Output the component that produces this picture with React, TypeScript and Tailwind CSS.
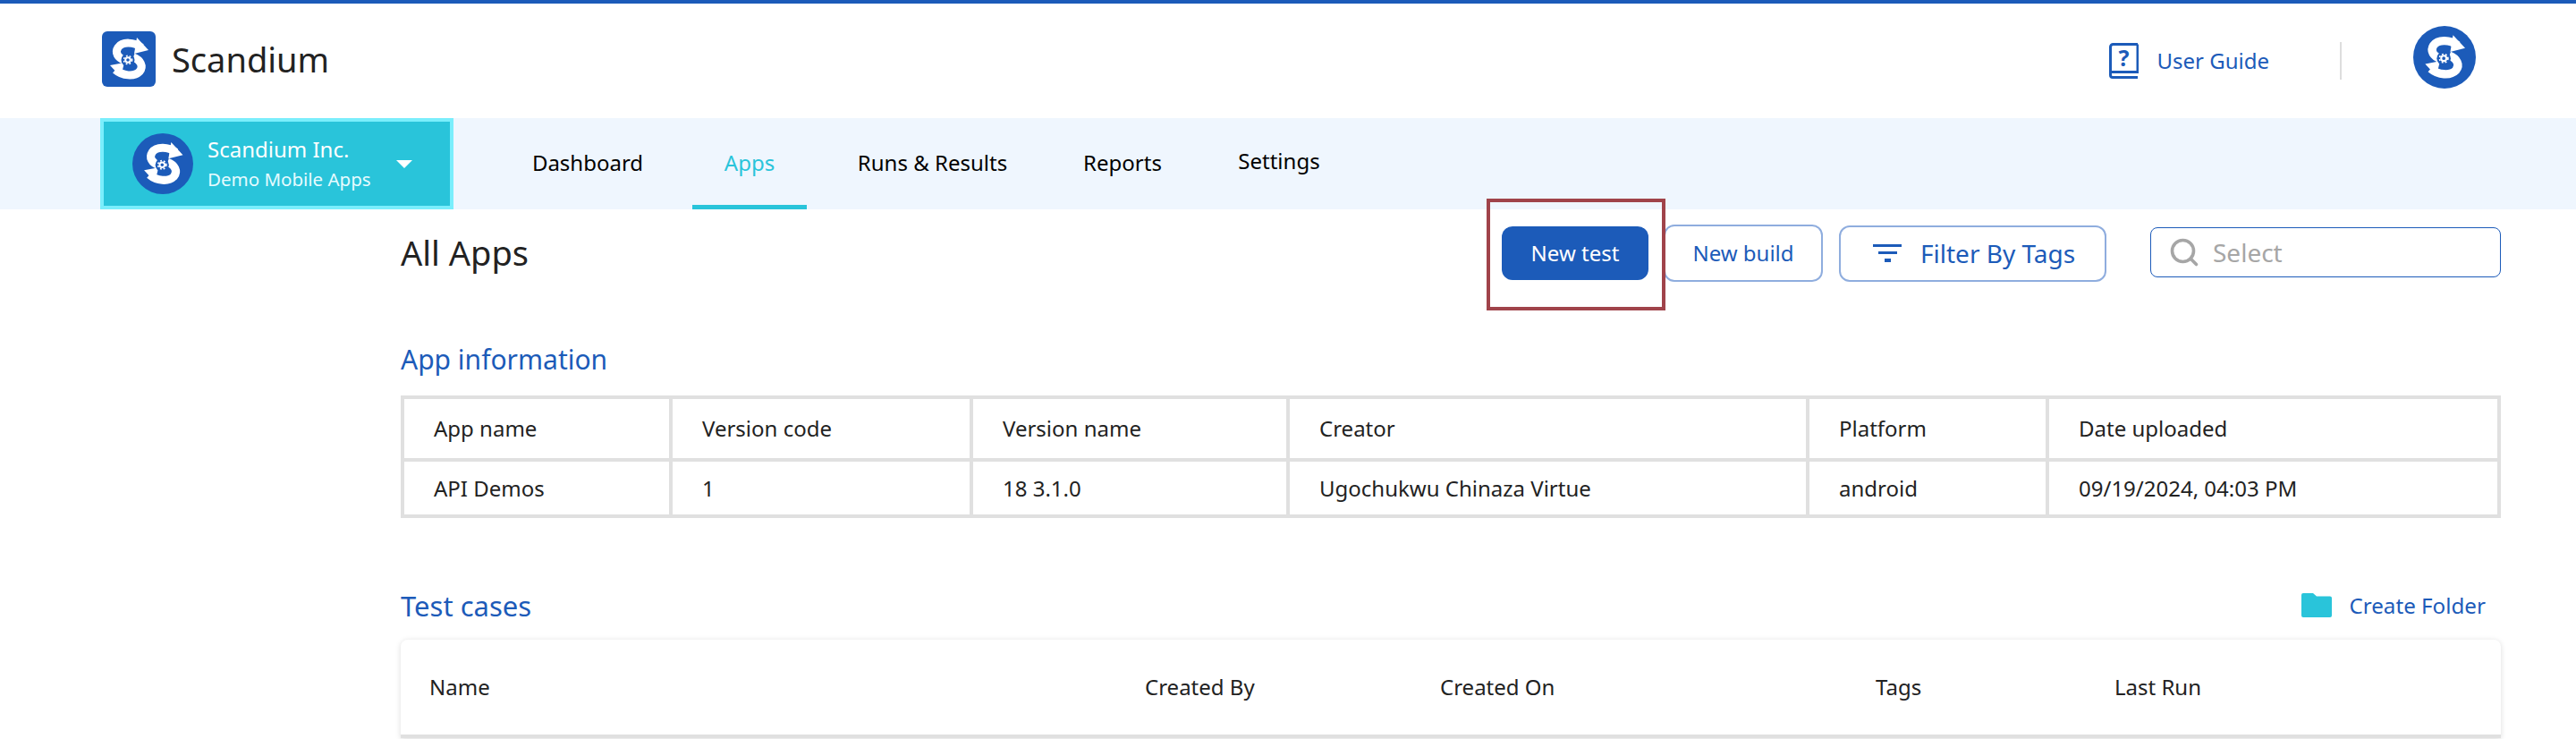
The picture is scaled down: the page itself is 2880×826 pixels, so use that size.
import { Search } from 'lucide-react';

const NAV_ITEMS = [
  { label: 'Dashboard', className: 'w-[122px] ml-[89px] pb-[2px]' },
  { label: 'Apps', active: true, className: 'w-[128px] ml-[56px]' },
  { label: 'Runs & Results', className: 'w-[169px] ml-[56px] pb-[2px]' },
  { label: 'Reports', className: 'w-[88px] ml-[84px] pb-[2px]' },
  { label: 'Settings', className: 'w-[92px] ml-[85px] pb-[6px]' },
];

const APP_COLUMNS = ['App name', 'Version code', 'Version name', 'Creator', 'Platform', 'Date uploaded'];
const APP_ROW = ['API Demos', '1', '18 3.1.0', 'Ugochukwu Chinaza Virtue', 'android', '09/19/2024, 04:03 PM'];
const COLUMN_WIDTHS = ['w-[300px]', 'w-[336px]', 'w-[354px]', 'w-[581px]', 'w-[268px]', 'w-[505px]'];

const TEST_COLUMNS = [
  { label: 'Name', className: 'w-[800px]' },
  { label: 'Created By', className: 'w-[330px]' },
  { label: 'Created On', className: 'w-[487px]' },
  { label: 'Tags', className: 'w-[267px]' },
  { label: 'Last Run', className: 'w-[200px]' },
];

// Scandium mark: an S made of two arrows round a small gear
function ScandiumGlyph({ className, fg, bg }: { className: string; fg: string; bg: string }) {
  return (
    <svg viewBox="0 0 60 62" className={className}>
      <path d="M44 18C36 12 23 11 18 18C14 24 18 30 25 32" fill="none" stroke={fg} strokeWidth="9" />
      <path d="M35 29C43 32 47 39 42 45C36 51 23 50 15 43" fill="none" stroke={fg} strokeWidth="9" />
      <path d="M39 7L52 21L36 25Z" fill={fg} />
      <path d="M9 38L25 35L21 51Z" fill={fg} />
      <circle cx="29" cy="32" r="7.5" fill={bg} />
      <circle cx="29" cy="32" r="2.8" fill="none" stroke={fg} strokeWidth="2" />
      <circle cx="29" cy="32" r="4.6" fill="none" stroke={fg} strokeWidth="1.6" strokeDasharray="1.8 2" />
    </svg>
  );
}

function LogoSquare() {
  return (
    <div className="flex h-[62px] w-[60px] items-center justify-center rounded-[6px] bg-[#1c5bb9]">
      <ScandiumGlyph className="h-[62px] w-[60px]" fg="#ffffff" bg="#1c5bb9" />
    </div>
  );
}

function LogoCircle({ size }: { size: string }) {
  return (
    <div className={`flex shrink-0 items-center justify-center rounded-full bg-[#1c5bb9] ${size}`}>
      <ScandiumGlyph className="h-[92%] w-[92%]" fg="#ffffff" bg="#1c5bb9" />
    </div>
  );
}

function GuideIcon() {
  return (
    <svg viewBox="0 0 33 40" className="h-[40px] w-[33px]" fill="none" stroke="#1c5bb9">
      <path d="M32 1.5H4.5A3 3 0 0 0 1.5 4.5V36A2.5 2.5 0 0 0 4 38.5H32" strokeWidth="3" />
      <path d="M32 1.5V32.5H1.5" strokeWidth="3" />
      <text
        x="16.5"
        y="26"
        textAnchor="middle"
        fontSize="25"
        fontWeight="700"
        fontFamily="Noto Sans, sans-serif"
        fill="#1c5bb9"
        stroke="none"
      >
        ?
      </text>
    </svg>
  );
}

function FilterIcon() {
  return (
    <div className="flex w-[32px] flex-col items-center gap-[5px]">
      <div className="h-[3px] w-[32px] bg-[#1c5bb9]" />
      <div className="h-[3px] w-[21px] bg-[#1c5bb9]" />
      <div className="h-[4px] w-[7px] bg-[#1c5bb9]" />
    </div>
  );
}

function FolderIcon() {
  return (
    <svg viewBox="0 0 34 27" className="h-[27px] w-[34px]">
      <path
        d="M2 0H13L17 3.5H32A2 2 0 0 1 34 5.5V25A2 2 0 0 1 32 27H2A2 2 0 0 1 0 25V2A2 2 0 0 1 2 0Z"
        fill="#29c4da"
      />
    </svg>
  );
}

export default function App() {
  return (
    <div
      className="h-[826px] w-[2880px] overflow-hidden bg-white text-[#222222]"
      style={{ fontFamily: '"Noto Sans", sans-serif' }}
    >
      <div className="h-[4px] bg-[#1c5bb9]" />

      {/* Top header */}
      <header className="flex h-[128px] items-center pl-[114px] pr-[112px]">
        <div className="flex items-center gap-[18px] pb-[5px]">
          <LogoSquare />
          <span className="text-[38px] leading-none text-[#222222]">Scandium</span>
        </div>
        <div className="ml-auto flex items-center">
          <GuideIcon />
          <span className="ml-[20px] text-[24px] text-[#1c5bb9]">User Guide</span>
          <div className="ml-[79px] h-[42px] w-[2px] bg-[#dddddd]" />
          <div className="mb-[8px] ml-[80px]">
            <LogoCircle size="h-[70px] w-[70px]" />
          </div>
        </div>
      </header>

      {/* Nav band */}
      <nav className="flex h-[102px] items-stretch bg-[#eff6fe] pl-[112px]">
        <div className="flex w-[395px] items-center border-[4px] border-[#7aeefc] bg-[#29c4da] pl-[32px] text-white">
          <LogoCircle size="h-[68px] w-[68px]" />
          <div className="ml-[16px] flex flex-col gap-[6px]">
            <span className="text-[24px] leading-[28px]">Scandium Inc.</span>
            <span className="text-[20.5px] leading-[26px] text-[#e6fbff]">Demo Mobile Apps</span>
          </div>
          <div className="ml-[28px] h-0 w-0 border-x-[9px] border-t-[9px] border-x-transparent border-t-white" />
        </div>
        {NAV_ITEMS.map((item) => (
          <div
            key={item.label}
            className={`flex items-center justify-center whitespace-nowrap text-[24px] ${item.className} ${
              item.active ? 'border-b-[5px] border-[#29c4da] pt-[3px] text-[#29c4da]' : 'text-black'
            }`}
          >
            {item.label}
          </div>
        ))}
      </nav>

      <main className="pl-[448px] pr-[84px]">
        {/* Title row */}
        <div className="relative flex h-[114px] items-center pb-[18px]">
          <h1 className="text-[38px] font-normal text-[#222222]">All Apps</h1>
          <div className="ml-auto flex items-center">
            <button className="mt-[2px] h-[60px] w-[164px] rounded-[12px] bg-[#1c5bb9] text-[24px] text-white">
              New test
            </button>
            <button className="ml-[17px] mt-[2px] h-[64px] w-[178px] rounded-[12px] border-2 border-[#8fadde] text-[24px] text-[#1c5bb9]">
              New build
            </button>
            <button className="ml-[18px] mt-[2px] flex h-[63px] w-[299px] items-center rounded-[12px] border-2 border-[#8fadde] pl-[36px] text-[#1c5bb9]">
              <FilterIcon />
              <span className="ml-[21px] text-[28px]">Filter By Tags</span>
            </button>
            <div className="ml-[49px] flex h-[56px] w-[392px] items-center rounded-[8px] border-[1.5px] border-[#1c5bb9] pl-[19px]">
              <Search className="h-[36px] w-[36px] text-[#a6a6a6]" strokeWidth={2.4} />
              <span className="ml-[14px] text-[28px] text-[#a6a6a6]">Select</span>
            </div>
          </div>
          {/* Highlight box from the annotated screenshot */}
          <div className="absolute left-[1214px] top-[-12px] h-[125px] w-[200px] border-[4px] border-[#a0434a]" />
        </div>

        {/* App information */}
        <h2 className="mt-[34px] text-[30px] font-normal leading-[40px] text-[#1c5bb9]">App information</h2>
        <table className="mt-[20px] w-[2344px] table-fixed border-collapse border-[4px] border-[#e0e0e0] text-[24px] text-[#222222]">
          <tbody>
            <tr className="h-[70px]">
              {APP_COLUMNS.map((label, i) => (
                <td key={label} className={`border-[4px] border-[#e0e0e0] pl-[33px] ${COLUMN_WIDTHS[i]}`}>
                  {label}
                </td>
              ))}
            </tr>
            <tr className="h-[63px]">
              {APP_ROW.map((value) => (
                <td key={value} className="border-[4px] border-[#e0e0e0] pl-[33px]">
                  {value}
                </td>
              ))}
            </tr>
          </tbody>
        </table>

        {/* Test cases */}
        <div className="mt-[78px] flex h-[40px] items-center">
          <h2 className="text-[31px] font-normal text-[#1c5bb9]">Test cases</h2>
          <div className="ml-auto flex items-center pr-[17px]">
            <FolderIcon />
            <span className="ml-[19px] text-[24.2px] text-[#1c5bb9]">Create Folder</span>
          </div>
        </div>
        <div className="mt-[18px] flex h-[110px] items-center rounded-t-[8px] border-b-[4px] border-[#e0e0e0] pl-[32px] text-[24px] text-[#222222] shadow-[0_1px_6px_rgba(0,0,0,0.14)]">
          {TEST_COLUMNS.map((col) => (
            <span key={col.label} className={`shrink-0 ${col.className}`}>
              {col.label}
            </span>
          ))}
        </div>
      </main>
    </div>
  );
}
